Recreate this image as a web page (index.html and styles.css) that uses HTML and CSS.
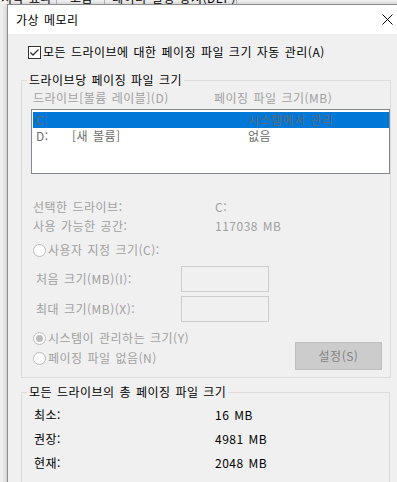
FILE: index.html
```html
<!DOCTYPE html>
<html lang="ko">
<head>
  <meta charset="UTF-8" />
  <title>가상 메모리</title>
  <link rel="stylesheet" href="styles.css">
</head>
<body>
  <div class="backdrop">
    <div class="tabs">
      <span class="tab tab-first">시각 효과</span>
      <span class="tab tab-mid">고급</span>
      <span class="tab tab-last">데이터 실행 방지(DEP)</span>
    </div>
  </div>

  <div class="dialog">
    <div class="titlebar">
      <span class="title">가상 메모리</span>
      <span class="close">
        <svg width="11" height="11" viewBox="0 0 11 11"><path d="M0.5 0.5 L10.5 10.5 M10.5 0.5 L0.5 10.5" stroke="#000" stroke-width="1" fill="none"/></svg>
      </span>
    </div>

    <div class="content">
      <label class="check-row">
        <span class="checkbox">
          <svg width="11" height="11" viewBox="0 0 11 11"><path d="M1.5 5.5 L4 8 L9.5 2.5" stroke="#333" stroke-width="1.3" fill="none"/></svg>
        </span>
        모든 드라이브에 대한 페이징 파일 크기 자동 관리(A)
      </label>

      <fieldset class="group">
        <legend>드라이브당 페이징 파일 크기</legend>
        <div class="col-head">
          <span class="col-drive">드라이브[볼륨 레이블](D)</span>
          <span>페이징 파일 크기(MB)</span>
        </div>
        <div class="listbox">
          <div class="item selected">
            <span class="item-drive">C:</span>
            <span class="item-label"></span>
            <span>시스템에서 관리</span>
          </div>
          <div class="item">
            <span class="item-drive">D:</span>
            <span class="item-label">[새 볼륨]</span>
            <span>없음</span>
          </div>
        </div>

        <div class="info">
          <div class="info-row"><span class="info-key">선택한 드라이브:</span><span>C:</span></div>
          <div class="info-row"><span class="info-key">사용 가능한 공간:</span><span>117038 MB</span></div>
        </div>

        <div class="radio-row custom">
          <span class="radio"></span>사용자 지정 크기(C):
        </div>

        <div class="size-rows">
          <div class="size-row"><span class="size-key">처음 크기(MB)(I):</span><span class="textbox"></span></div>
          <div class="size-row"><span class="size-key">최대 크기(MB)(X):</span><span class="textbox"></span></div>
        </div>

        <div class="bottom">
          <div class="bottom-radios">
            <div class="radio-row"><span class="radio checked"></span>시스템이 관리하는 크기(Y)</div>
            <div class="radio-row"><span class="radio"></span>페이징 파일 없음(N)</div>
          </div>
          <button class="btn" disabled>설정(S)</button>
        </div>
      </fieldset>

      <fieldset class="group totals">
        <legend>모든 드라이브의 총 페이징 파일 크기</legend>
        <div class="total-row"><span class="total-key">최소:</span><span>16 MB</span></div>
        <div class="total-row"><span class="total-key">권장:</span><span>4981 MB</span></div>
        <div class="total-row"><span class="total-key">현재:</span><span>2048 MB</span></div>
      </fieldset>
    </div>
  </div>
</body>
</html>
```

FILE: styles.css
```css
* {
  box-sizing: border-box;
  margin: 0;
  padding: 0;
}

body {
  width: 397px;
  height: 482px;
  overflow: hidden;
  background: #f0f0f0;
  font-family: "Noto Sans CJK KR", "Noto Sans", sans-serif;
  font-size: 12px;
  line-height: 16px;
  letter-spacing: 0.5px;
  word-spacing: 1px;
  color: #000;
}

/* window behind the dialog */
.backdrop {
  height: 4px;
  overflow: hidden;
  background: #f6f6f6;
}

.tabs {
  display: flex;
  margin-top: -10px;
  white-space: nowrap;
}

.tab {
  border-right: 1px solid #adadad;
  color: #000;
}

.tab-first {
  width: 57px;
  padding-left: 1px;
}

.tab-mid {
  width: 48px;
  padding-left: 13px;
}

.tab-last {
  width: 132px;
  padding-left: 7px;
}

/* dialog */
.dialog {
  width: 404px;
  height: 490px;
  margin-left: 7px;
  border: 1px solid #8c8c8c;
  background: #f0f0f0;
  box-shadow: 0 0 6px rgba(0, 0, 0, 0.25);
}

.titlebar {
  height: 29px;
  background: #fff;
  display: flex;
  align-items: center;
  justify-content: space-between;
  padding-left: 8px;
}

.close {
  width: 46px;
  height: 29px;
  display: flex;
  align-items: center;
  justify-content: center;
}

.content {
  padding-top: 10px;
}

.check-row {
  display: flex;
  align-items: center;
  gap: 2px;
  margin-left: 20px;
  height: 16px;
}

.checkbox {
  width: 13px;
  height: 13px;
  border: 1px solid #333;
  background: #fff;
  display: flex;
  align-items: center;
  justify-content: center;
}

/* group boxes */
.group {
  width: 369px;
  margin: 12px 0 0 13px;
  border: 1px solid #dcdcdc;
  padding: 0 0 7px 0;
}

.group legend {
  margin-left: 5px;
  padding: 0 2px;
  line-height: 16px;
}

.col-head {
  display: flex;
  margin-top: 2px;
  padding-left: 11px;
  color: #a0a0a0;
}

.col-drive {
  width: 181px;
}

.listbox {
  width: 359px;
  height: 65px;
  margin: 3px 0 0 9px;
  border: 1px solid #828790;
  background: #fff;
  padding: 2px 0 0 1px;
  color: #6d6d6d;
}

.item {
  display: flex;
  height: 16px;
  padding-left: 3px;
}

.item.selected {
  background: #0078d7;
  color: #5f6a78;
}

.item-drive {
  width: 36px;
}

.item-label {
  width: 176px;
}

.info {
  margin-top: 25px;
  padding-left: 11px;
  color: #a0a0a0;
  display: flex;
  flex-direction: column;
  gap: 3px;
}

.info-row {
  display: flex;
}

.info-key {
  width: 182px;
}

.radio-row {
  display: flex;
  align-items: center;
  gap: 2px;
  color: #a0a0a0;
  height: 20px;
}

.radio-row.custom {
  margin-top: 6px;
  padding-left: 11px;
}

.radio {
  width: 13px;
  height: 13px;
  border: 1px solid #bcbcbc;
  border-radius: 50%;
  background: #fff;
  display: flex;
  align-items: center;
  justify-content: center;
}

.radio.checked::after {
  content: "";
  width: 7px;
  height: 7px;
  border-radius: 50%;
  background: #bcbcbc;
}

.size-rows {
  margin-top: 6px;
  padding-left: 14px;
  display: flex;
  flex-direction: column;
  gap: 4px;
  color: #a0a0a0;
}

.size-row {
  display: flex;
  align-items: center;
  height: 26px;
}

.size-key {
  width: 145px;
}

.textbox {
  width: 88px;
  height: 26px;
  border: 1px solid #cccccc;
  background: #f0f0f0;
}

.bottom {
  display: flex;
  justify-content: space-between;
  align-items: flex-start;
  margin-top: 6px;
  padding: 0 8px 0 11px;
}

.btn {
  width: 87px;
  height: 28px;
  margin-top: 14px;
  border: 1px solid #bfbfbf;
  background: #cccccc;
  color: #838383;
  font: inherit;
  letter-spacing: inherit;
}

.totals {
  margin-top: 6px;
  padding-bottom: 40px;
}

.total-row {
  display: flex;
  padding-left: 12px;
  line-height: 24px;
}

.totals .total-row:first-of-type {
  margin-top: 3px;
}

.total-key {
  width: 181px;
}
```
